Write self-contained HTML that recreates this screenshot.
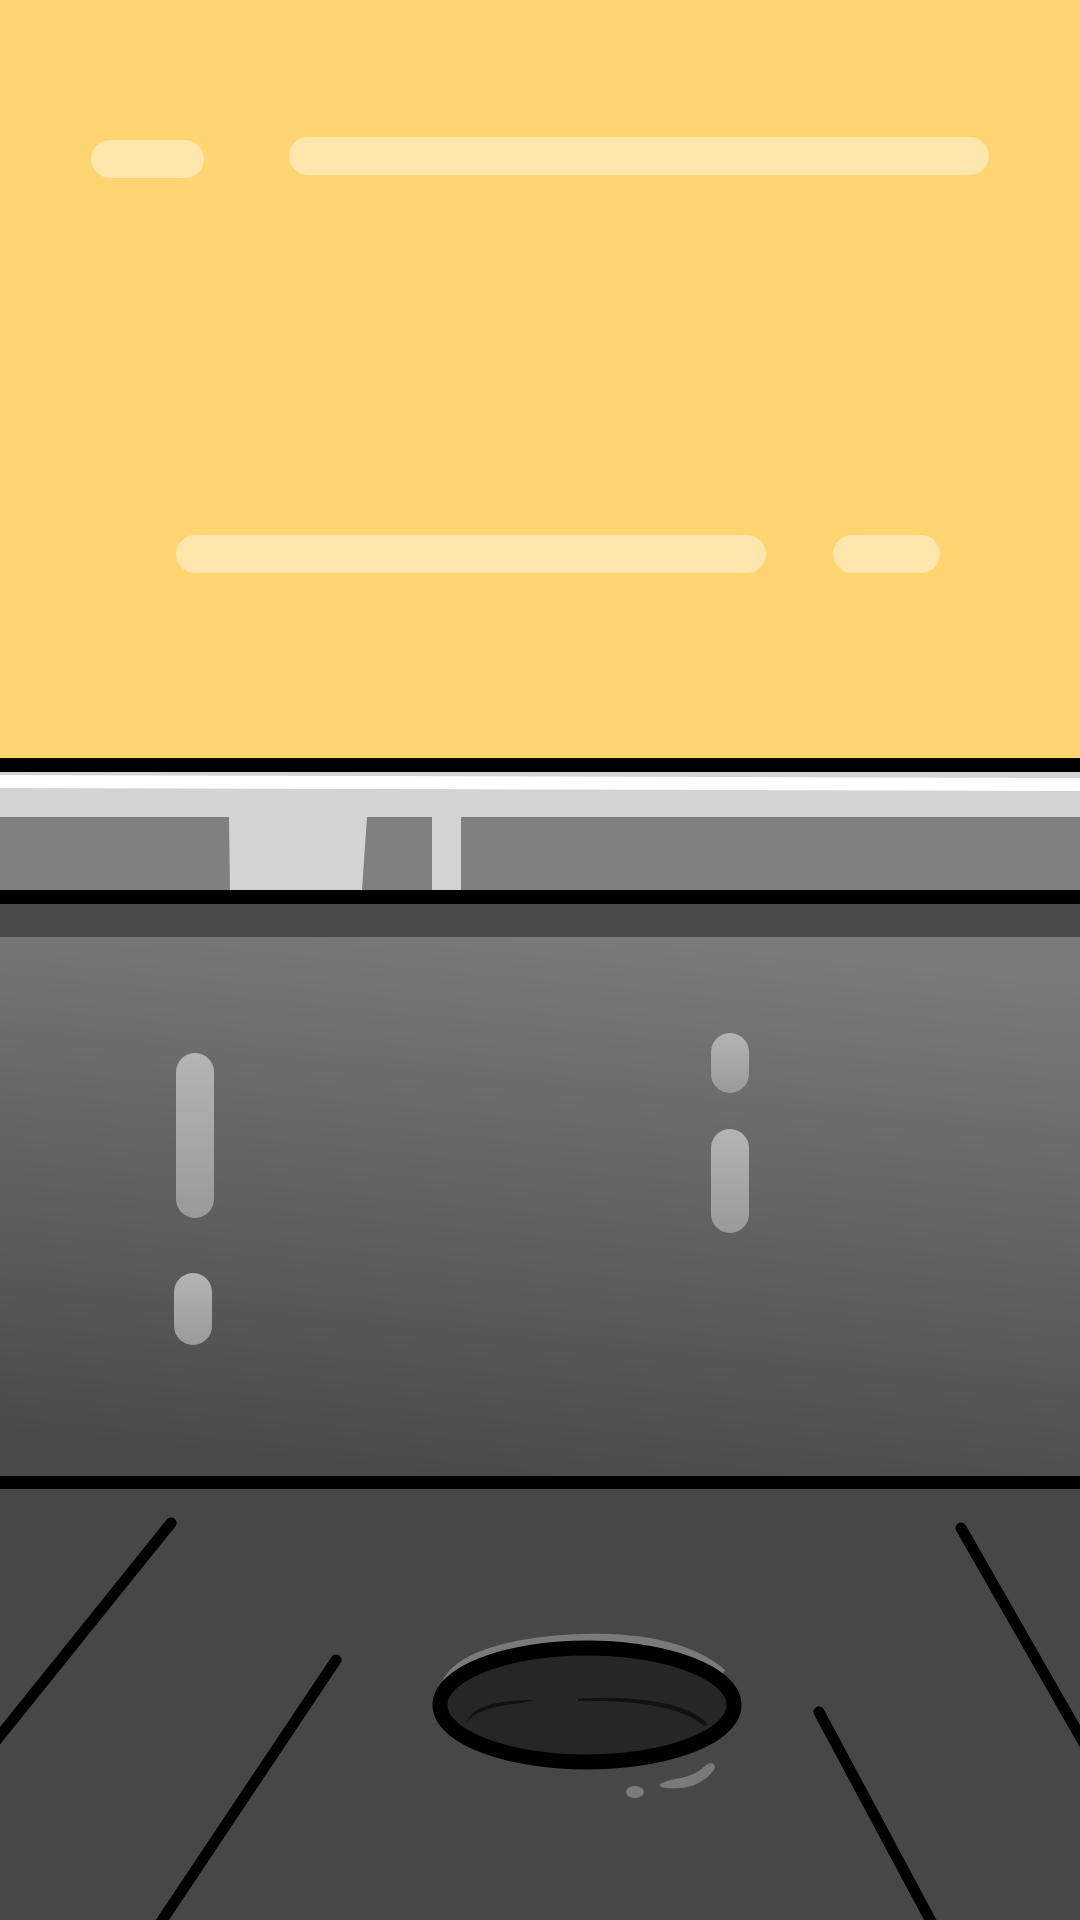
<!DOCTYPE html>
<html><head><meta charset="utf-8"><style>
html,body{margin:0;padding:0;width:1080px;height:1920px;overflow:hidden;background:#474747}
</style></head><body>
<svg width="1080" height="1920" viewBox="0 0 1080 1920" xmlns="http://www.w3.org/2000/svg">
<defs>
<linearGradient id="g" x1="0.6" y1="0" x2="0.4" y2="1">
<stop offset="0" stop-color="#7a7a7a"/><stop offset="1" stop-color="#4a4a4a"/>
</linearGradient>
<linearGradient id="p" x1="0" y1="0" x2="0" y2="1">
<stop offset="0" stop-color="#b4b4b4"/><stop offset="1" stop-color="#9a9a9a"/>
</linearGradient>
</defs>
<rect x="0" y="0" width="1080" height="758" fill="#ffd572"/>
<g fill="#ffe6ad">
<rect x="91" y="140" width="113" height="38" rx="19"/>
<rect x="289" y="137" width="700" height="38" rx="19"/>
<rect x="176" y="535" width="590" height="38" rx="19"/>
<rect x="833" y="535" width="107" height="38" rx="19"/>
</g>
<rect x="0" y="758" width="1080" height="14" fill="#000"/>
<rect x="0" y="772" width="1080" height="45" fill="#d3d3d3"/>
<polygon points="0,775 1080,778 1080,791 0,788" fill="#fff"/>
<rect x="0" y="817" width="1080" height="73" fill="#808080"/>
<polygon points="229,817 367,817 362,890 230,890" fill="#d3d3d3"/>
<rect x="432" y="817" width="29" height="73" fill="#d3d3d3"/>
<rect x="0" y="890" width="1080" height="14" fill="#000"/>
<rect x="0" y="904" width="1080" height="33" fill="#4a4a4a"/>
<rect x="0" y="937" width="1080" height="539" fill="url(#g)"/>
<g fill="url(#p)">
<rect x="176" y="1053" width="38" height="165" rx="19"/>
<rect x="174" y="1273" width="38" height="72" rx="19"/>
<rect x="711" y="1033" width="38" height="60" rx="19"/>
<rect x="711" y="1129" width="38" height="104" rx="19"/>
</g>
<rect x="0" y="1476" width="1080" height="13" fill="#000"/>
<rect x="0" y="1489" width="1080" height="431" fill="#474747"/>
<g stroke="#000" stroke-width="11" stroke-linecap="round">
<line x1="171" y1="1523" x2="-5" y2="1742"/>
<line x1="336" y1="1660" x2="159" y2="1925"/>
<line x1="961" y1="1528" x2="1085" y2="1745"/>
<line x1="819" y1="1712" x2="933" y2="1925"/>
</g>
<path d="M442,1682 C460,1640 560,1632 610,1634 C660,1636 700,1648 725,1670 L720,1680 C660,1640 500,1640 442,1682Z" fill="#7a7a7a"/>
<ellipse cx="587" cy="1705" rx="147" ry="57" fill="#262626" stroke="#000" stroke-width="15"/>
<path d="M466,1725 C470,1705 500,1700 535,1700 L520,1703 C495,1706 470,1712 466,1725Z" fill="#111"/>
<path d="M578,1699 C620,1695 690,1700 708,1725 L704,1726 C680,1705 630,1700 578,1701Z" fill="#111"/>
<ellipse cx="635" cy="1792" rx="9" ry="6" fill="#7a7a7a"/>
<path d="M662,1783 C675,1777 690,1780 705,1766 C712,1760 718,1765 713,1771 C705,1782 690,1788 680,1788 C665,1789 655,1787 662,1783Z" fill="#7a7a7a"/>
</svg>
</body></html>
